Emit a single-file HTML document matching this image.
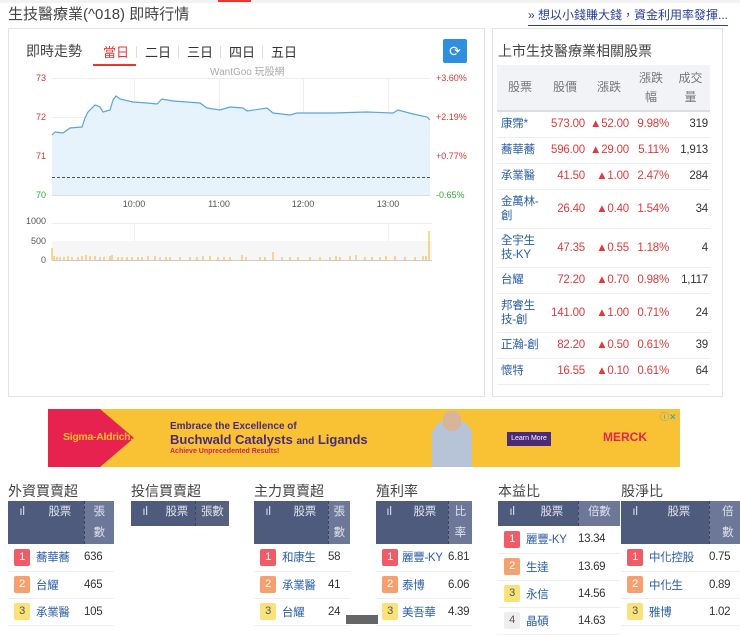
<!DOCTYPE html>
<html><head><meta charset="utf-8"><style>
*{margin:0;padding:0;box-sizing:border-box}
body{width:740px;height:624px;overflow:hidden;background:#fff;font-family:"Liberation Sans","Noto Sans CJK TC",sans-serif;color:#333;position:relative}
.a{position:absolute;white-space:nowrap}
.box{position:absolute;border:1px solid #e3e3e3;background:#fff}
.rt td{font-size:11.5px;height:26px;border-bottom:1px solid #eee;padding:0 2px;color:#e03a3a;text-align:right;letter-spacing:-0.2px}
.rt td:first-child{color:#2a5ea8;text-align:left;padding-left:4px;line-height:14px}
.rt td:last-child{color:#333}
.rt th{font-weight:normal;color:#777;font-size:12px;line-height:19px;background:#f1f3f6;height:46px;text-align:center;border-bottom:2px solid #ddd}
.bt{position:absolute;top:501px;border-collapse:collapse;font-size:11.5px;letter-spacing:-0.3px}
.bt th{background:#4f5b7c;color:#dfe3ee;font-weight:normal;line-height:21px;vertical-align:top;padding-top:1px;text-align:center}
.bt th.v{background:#6d7798;border-left:1px dashed #3a4460}
.bt td{height:27px;border-bottom:1px solid #eee;color:#333}
.bt td.n{color:#2a5ea8}
.r{display:inline-block;width:16px;height:17px;line-height:17px;text-align:center;font-size:11px;color:#fff;border-radius:2px;margin-left:6px}
.r1{background:#ef5b66}.r2{background:#f5a06f}.r3{background:#f9e27a;color:#555}.r4{background:#eee;color:#555}
.h{font-size:14px;color:#444}
</style></head><body>
<div class="a" style="left:0;top:0;width:740px;height:3px;background:#f3f3f3"></div>
<div class="a" style="left:218px;top:0;width:33px;height:2px;background:#e33"></div>
<div class="a" style="left:8px;top:3px;font-size:15px;color:#444">生技醫療業(^018) 即時行情</div>
<div class="a" style="left:528px;top:6px;font-size:12px;color:#2a3f9a;border-bottom:1px solid #2a3f9a;padding-bottom:2px">» 想以小錢賺大錢，資金利用率發揮...</div>

<div class="box" style="left:8px;top:28px;width:477px;height:369px"></div>
<div class="a" style="left:26px;top:41px;font-size:14px;color:#444">即時走勢</div>
<div class="a" style="left:103px;top:42px;font-size:13px;color:#e33">當日</div>
<div class="a" style="left:93px;top:64px;width:43px;height:2px;background:#e33"></div>
<div class="a" style="left:145px;top:42px;font-size:13px">二日</div>
<div class="a" style="left:187px;top:42px;font-size:13px">三日</div>
<div class="a" style="left:229px;top:42px;font-size:13px">四日</div>
<div class="a" style="left:271px;top:42px;font-size:13px">五日</div>
<div class="a" style="left:136px;top:46px;width:1px;height:12px;background:#ddd"></div>
<div class="a" style="left:178px;top:46px;width:1px;height:12px;background:#ddd"></div>
<div class="a" style="left:220px;top:46px;width:1px;height:12px;background:#ddd"></div>
<div class="a" style="left:262px;top:46px;width:1px;height:12px;background:#ddd"></div>
<div class="a" style="left:443px;top:39px;width:24px;height:24px;background:#2e8fe0;border-radius:2px;color:#fff;font-size:14px;text-align:center;line-height:24px">⟳</div>
<div class="a" style="left:210px;top:63px;font-size:10px;color:#aaa">WantGoo 玩股網</div>

<svg class="a" style="left:0;top:0" width="490" height="270">
<g stroke="#eee" stroke-width="1"><line x1="52" y1="78.5" x2="430" y2="78.5"/><line x1="52" y1="117.5" x2="430" y2="117.5"/><line x1="52" y1="156.5" x2="430" y2="156.5"/>
<line x1="134.5" y1="78" x2="134.5" y2="195"/><line x1="219.5" y1="78" x2="219.5" y2="195"/><line x1="303.5" y1="78" x2="303.5" y2="195"/><line x1="388.5" y1="78" x2="388.5" y2="195"/>
<line x1="52" y1="223.5" x2="432" y2="223.5"/><line x1="134.5" y1="223" x2="134.5" y2="260"/><line x1="388.5" y1="223" x2="388.5" y2="260"/></g>
<path d="M52,135 L55,132 L63,133 L70,128 L82,127 L85,118 L88,112 L95,105 L100,107 L103,112 L110,110 L113,100 L116,96 L120,99 L133,102 L147,103 L157,104 L162,99 L173,101 L187,102 L200,103 L207,108 L220,110 L230,107 L243,108 L247,111 L267,108 L273,113 L290,115 L297,113 L333,113 L367,112 L393,113 L398,110 L413,114 L427,117 L430,120 L430,195 L52,195 Z" fill="#e6f3fd"/>
<path d="M52,135 L55,132 L63,133 L70,128 L82,127 L85,118 L88,112 L95,105 L100,107 L103,112 L110,110 L113,100 L116,96 L120,99 L133,102 L147,103 L157,104 L162,99 L173,101 L187,102 L200,103 L207,108 L220,110 L230,107 L243,108 L247,111 L267,108 L273,113 L290,115 L297,113 L333,113 L367,112 L393,113 L398,110 L413,114 L427,117 L430,120" fill="none" stroke="#5aa5dc" stroke-width="1.2"/>
<line x1="52" y1="177.5" x2="430" y2="177.5" stroke="#555" stroke-dasharray="3,2"/>
<line x1="52" y1="195.5" x2="430" y2="195.5" stroke="#ddd"/>
<rect x="52" y="241" width="380" height="19" fill="#f6f6f6"/>
<path d="M52,260V248M54,260V256M57,260V257M60,260V257M64,260V257M68,260V256M72,260V257M78,260V257M82,260V256M86,260V255M90,260V256M95,260V256M100,260V257M104,260V257M110,260V256M112,260V255M118,260V257M122,260V257M127,260V257M132,260V257M138,260V257M142,260V257M148,260V256M155,260V256M160,260V257M166,260V257M170,260V257M180,260V257M190,260V257M197,260V257M203,260V256M210,260V256M218,260V257M224,260V257M230,260V257M242,260V255M246,260V257M260,260V257M265,260V257M273,260V252M282,260V257M290,260V257M298,260V257M310,260V257M320,260V257M330,260V257M336,260V256M340,260V257M350,260V256M356,260V255M365,260V257M372,260V257M380,260V257M386,260V256M395,260V256M405,260V257M415,260V257M423,260V256M426,260V256M429,260V231" stroke="#f3b32a" stroke-width="1"/>
<line x1="52" y1="260.5" x2="432" y2="260.5" stroke="#ccc"/>
<g font-size="9" font-family="Liberation Sans,sans-serif">
<text x="46" y="81" fill="#d33" text-anchor="end">73</text><text x="46" y="120" fill="#d33" text-anchor="end">72</text><text x="46" y="159" fill="#d33" text-anchor="end">71</text><text x="46" y="198" fill="#3a3" text-anchor="end">70</text>
<text x="436" y="81" fill="#d33">+3.60%</text><text x="436" y="120" fill="#d33">+2.19%</text><text x="436" y="159" fill="#d33">+0.77%</text><text x="436" y="198" fill="#3a3">-0.65%</text>
<g fill="#555" text-anchor="middle"><text x="134" y="207">10:00</text><text x="219" y="207">11:00</text><text x="303" y="207">12:00</text><text x="388" y="207">13:00</text></g>
<g fill="#555" text-anchor="end"><text x="46" y="224">1000</text><text x="46" y="244">500</text><text x="46" y="263">0</text></g></g>
</svg>

<div class="box" style="left:492px;top:28px;width:231px;height:369px"></div>
<div class="a" style="left:498px;top:41px;font-size:14px;color:#444">上市生技醫療業相關股票</div>
<table class="rt a" style="left:497px;top:65px;width:213px;border-collapse:collapse;table-layout:fixed">
<tr><th style="width:46px">股票</th><th style="width:44px">股價</th><th style="width:44px">漲跌</th><th style="width:40px">漲跌<br>幅</th><th>成交<br>量</th></tr>
<tr><td>康霈*</td><td>573.00</td><td>▲52.00</td><td>9.98%</td><td>319</td></tr>
<tr><td>蕎華蕎</td><td>596.00</td><td>▲29.00</td><td>5.11%</td><td>1,913</td></tr>
<tr><td>承業醫</td><td>41.50</td><td>▲1.00</td><td>2.47%</td><td>284</td></tr>
<tr><td style="height:39px">金萬林-<br>創</td><td>26.40</td><td>▲0.40</td><td>1.54%</td><td>34</td></tr>
<tr><td style="height:39px">全宇生<br>技-KY</td><td>47.35</td><td>▲0.55</td><td>1.18%</td><td>4</td></tr>
<tr><td>台耀</td><td>72.20</td><td>▲0.70</td><td>0.98%</td><td>1,117</td></tr>
<tr><td style="height:39px">邦睿生<br>技-創</td><td>141.00</td><td>▲1.00</td><td>0.71%</td><td>24</td></tr>
<tr><td>正瀚-創</td><td>82.20</td><td>▲0.50</td><td>0.61%</td><td>39</td></tr>
<tr><td>懷特</td><td>16.55</td><td>▲0.10</td><td>0.61%</td><td>64</td></tr>
</table>

<div class="a" style="left:48px;top:409px;width:632px;height:58px;background:#f9c235"></div>
<svg class="a" style="left:48px;top:409px" width="90" height="58"><polygon points="0,0 52,0 86,29 52,58 0,58" fill="#e8224f"/></svg>
<div class="a" style="left:63px;top:431px;font-size:10.5px;font-weight:bold;color:#f9c235;letter-spacing:-0.3px">Sigma-Aldrich.</div>
<div class="a" style="left:170px;top:421px;font-size:10px;font-weight:bold;color:#4b2a78">Embrace the Excellence of</div>
<div class="a" style="left:170px;top:432px;font-size:13px;font-weight:bold;color:#4b2a78">Buchwald Catalysts <span style="font-size:10px">and</span> Ligands</div>
<div class="a" style="left:170px;top:448px;font-size:7px;color:#d0224f;font-weight:bold">Achieve Unprecedented Results!</div>
<div class="a" style="left:432px;top:420px;width:40px;height:47px;background:#b7c4d8;border-radius:16px 16px 0 0"></div>
<div class="a" style="left:443px;top:411px;width:18px;height:20px;background:#d8b49a;border-radius:8px"></div>
<div class="a" style="left:507px;top:432px;width:44px;height:14px;background:#4b2a78;color:#fff;font-size:7px;line-height:14px;text-align:center">Learn More</div>
<div class="a" style="left:603px;top:430px;font-size:12px;font-weight:bold;color:#e8224f">MERCK</div>
<div class="a" style="left:660px;top:410px;font-size:9px;color:#39c">ⓘ✕</div>

<div class="a h" style="left:8px;top:481px">外資買賣超</div>
<div class="a h" style="left:131px;top:481px">投信買賣超</div>
<div class="a h" style="left:254px;top:481px">主力買賣超</div>
<div class="a h" style="left:376px;top:481px">殖利率</div>
<div class="a h" style="left:498px;top:481px">本益比</div>
<div class="a h" style="left:621px;top:481px">股淨比</div>

<table class="bt" style="left:8px;width:106px"><tr><th style="width:28px;height:42px">ıl</th><th style="width:48px">股票</th><th class="v">張<br>數</th></tr>
<tr><td><span class="r r1">1</span></td><td class="n">蕎華蕎</td><td>636</td></tr>
<tr><td><span class="r r2">2</span></td><td class="n">台耀</td><td>465</td></tr>
<tr><td><span class="r r3">3</span></td><td class="n">承業醫</td><td>105</td></tr></table>

<table class="bt" style="left:131px;width:98px"><tr><th style="width:28px;height:25px">ıl</th><th style="width:36px">股票</th><th class="v" style="background:#56617f">張數</th></tr></table>

<table class="bt" style="left:254px;width:96px"><tr><th style="width:28px;height:42px">ıl</th><th style="width:46px">股票</th><th class="v">張<br>數</th></tr>
<tr><td><span class="r r1">1</span></td><td class="n">和康生</td><td>58</td></tr>
<tr><td><span class="r r2">2</span></td><td class="n">承業醫</td><td>41</td></tr>
<tr><td><span class="r r3">3</span></td><td class="n">台耀</td><td>24</td></tr></table>

<table class="bt" style="left:376px;width:96px;table-layout:fixed"><tr><th style="width:26px;height:42px">ıl</th><th style="width:46px">股票</th><th class="v">比<br>率</th></tr>
<tr><td><span class="r r1">1</span></td><td class="n">麗豐-KY</td><td>6.81</td></tr>
<tr><td><span class="r r2">2</span></td><td class="n">泰博</td><td>6.06</td></tr>
<tr><td><span class="r r3">3</span></td><td class="n">美吾華</td><td>4.39</td></tr></table>

<table class="bt" style="left:498px;width:122px"><tr><th style="width:28px;height:25px">ıl</th><th style="width:52px">股票</th><th class="v">倍數</th></tr>
<tr><td style="height:26.5px"><span class="r r1">1</span></td><td class="n">麗豐-KY</td><td>13.34</td></tr>
<tr><td style="height:26.5px"><span class="r r2">2</span></td><td class="n">生達</td><td>13.69</td></tr>
<tr><td style="height:26.5px"><span class="r r3">3</span></td><td class="n">永信</td><td>14.56</td></tr>
<tr><td style="height:26.5px"><span class="r r4">4</span></td><td class="n">晶碩</td><td>14.63</td></tr></table>

<table class="bt" style="left:621px;width:125px"><tr><th style="width:28px;height:42px">ıl</th><th style="width:60px">股票</th><th class="v">倍<br>數</th></tr>
<tr><td><span class="r r1">1</span></td><td class="n">中化控股</td><td>0.75</td></tr>
<tr><td><span class="r r2">2</span></td><td class="n">中化生</td><td>0.89</td></tr>
<tr><td><span class="r r3">3</span></td><td class="n">雅博</td><td>1.02</td></tr></table>

<div class="a" style="left:346px;top:615px;width:32px;height:9px;background:#666"></div>
</body></html>
